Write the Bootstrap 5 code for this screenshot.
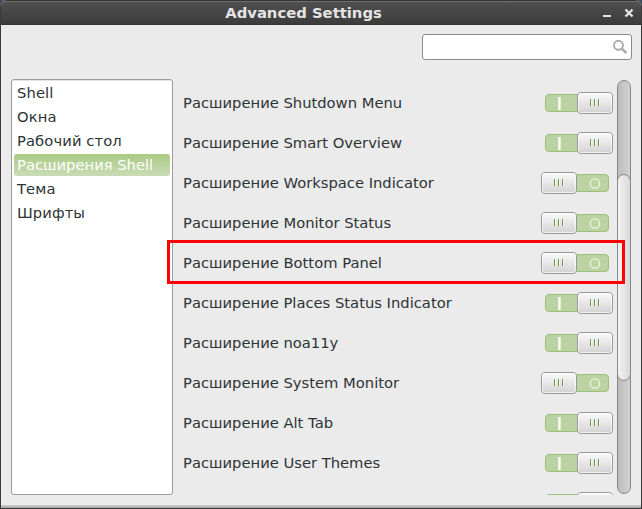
<!DOCTYPE html>
<html lang="ru">
<head>
<meta charset="utf-8">
<title>Advanced Settings</title>
<link rel="stylesheet" href="https://cdn.jsdelivr.net/npm/bootstrap@5.3.0/dist/css/bootstrap.min.css">
<style>
body{width:642px;height:509px;background:#3f5160;font-family:"DejaVu Sans",sans-serif;font-size:14.74px;color:#2d3436}
.win{width:642px;height:509px;background:#ebebeb;border:1px solid #3a3a3a;border-top:0;border-radius:6px 6px 0 0}
.titlebar{height:25px;margin:0 -1px;background:linear-gradient(#505050,#3c3c3c);border-top:1px solid #333;border-bottom:1px solid #353535;box-shadow:inset 0 1px #707070;border-radius:6px 6px 0 0;color:#e4e4e4}
.wtitle{font-weight:700;font-size:14.8px;line-height:23px;padding-right:35px}
.wbtns{right:8px;top:7px;gap:12px}
.searchrow{height:54px;padding:9px 9px 0 0}
.searchbox{width:210px;height:26px;border:1px solid #8b8b8b;border-radius:3px;background:#fff;padding-right:3px}
.side{width:162px;height:416px;border:1px solid #9c9c9c;border-radius:3px;padding:1px;box-shadow:inset 0 1px #e4e4e4}
.side .list-group-item{height:24px;line-height:22px;padding:1px 4px;background:transparent;color:#2d3436;border:0;letter-spacing:.1px}
.side .list-group-item.active{height:22px;line-height:20px;margin:1px 1px;padding:1px 3px;border-radius:3px;color:#fff;background:linear-gradient(#aacb85,#c9dbb5);letter-spacing:0}
.main{margin-left:10px}
.rows{width:440px;height:416px;padding:4px 0 0 10px;margin-right:4px}
.optrow{height:40px;flex:none}
.sw{width:72px;height:22px}
.defs{width:0;height:0}
.scroller{width:14px;height:414px;margin-top:1px;border:1px solid #888;border-radius:7px;background:linear-gradient(90deg,#bcbcbc,#d2d2d2);padding-top:93px}
.thumb{width:14px;height:207px;margin-left:-1px;border:1px solid #888;border-radius:7px;background:linear-gradient(90deg,#f3f3f3,#d8d8d8)}
.foot{height:3px;margin-top:10px;background:linear-gradient(#cfcfcf,#a3a3a3)}
.marker{left:167px;top:240px;width:458px;height:44px;border:3px solid #f00}
</style>
</head>
<body class="m-0 overflow-hidden position-relative">
<svg class="defs position-absolute">
<defs>
<linearGradient id="kg" x1="0" y1="0" x2="0" y2="1"><stop offset="0" stop-color="#fafafa"/><stop offset="1" stop-color="#d2d2d2"/></linearGradient>
</defs>
<symbol id="knob" viewBox="0 0 36 22"><rect x=".5" y=".5" width="35" height="21" rx="3.5" fill="url(#kg)" stroke="#999"/><rect x="1.5" y="1.5" width="33" height="19" rx="2.5" fill="none" stroke="#fff" stroke-opacity=".65"/><path d="M13.5 7v7M17.5 7v7M21.5 7v7" stroke="#6c9740"/><path d="M14.5 7v7M18.5 7v7M22.5 7v7" stroke="#fff" stroke-opacity=".6"/></symbol>
<symbol id="on" viewBox="0 0 72 22"><rect x="4.500" y="2.500" width="50" height="17" rx="3.500" fill="#bbd3a2" stroke="#9abf76"/><path d="M17.500 5v13" stroke="#e3efe6"/><path d="M18.500 5v13" stroke="#fff" stroke-width="1.500"/><path d="M19.500 5v13" stroke="#f7f3dc" stroke-width=".8"/><use href="#knob" x="36" y="0" width="36" height="22"/></symbol>
<symbol id="off" viewBox="0 0 72 22"><rect x="17.500" y="2.500" width="50" height="17" rx="3.500" fill="#bbd3a2" stroke="#9abf76"/><circle cx="54" cy="11.500" r="4.700" fill="none" stroke="#edf4e5" stroke-width="1.200"/><use href="#knob" x="0" y="0" width="36" height="22"/></symbol>
</svg>
<div class="win d-flex flex-column overflow-hidden">
  <header class="titlebar position-relative text-center flex-shrink-0">
    <div class="wtitle">Advanced Settings</div>
    <div class="wbtns position-absolute d-flex">
      <svg width="10" height="10"><path d="M1 8h8" stroke="#e4e4e4" stroke-width="2"/></svg>
      <svg width="10" height="10"><path d="M1.500 1.500l7 7M8.500 1.500l-7 7" stroke="#e4e4e4" stroke-width="2.400"/></svg>
    </div>
  </header>
  <div class="searchrow d-flex justify-content-end flex-shrink-0">
    <div class="searchbox d-flex align-items-center justify-content-end"><svg width="16" height="16" fill="none" stroke="#aaa"><circle cx="6.500" cy="6.300" r="4.500" stroke-width="1.900"/><path d="M9.800 9.600l4.700 4.500" stroke-width="2.500"/></svg></div>
  </div>
  <div class="main d-flex flex-shrink-0">
    <nav class="side list-group bg-white flex-shrink-0">
      <div class="list-group-item">Shell</div>
      <div class="list-group-item">Окна</div>
      <div class="list-group-item">Рабочий стол</div>
      <div class="list-group-item active">Расширения Shell</div>
      <div class="list-group-item">Тема</div>
      <div class="list-group-item">Шрифты</div>
    </nav>
    <div class="rows d-flex flex-column overflow-hidden flex-shrink-0">
      <div class="optrow d-flex align-items-center justify-content-between"><span>Расширение Shutdown Menu</span><svg class="sw"><use href="#on"/></svg></div>
      <div class="optrow d-flex align-items-center justify-content-between"><span>Расширение Smart Overview</span><svg class="sw"><use href="#on"/></svg></div>
      <div class="optrow d-flex align-items-center justify-content-between"><span>Расширение Workspace Indicator</span><svg class="sw"><use href="#off"/></svg></div>
      <div class="optrow d-flex align-items-center justify-content-between"><span>Расширение Monitor Status</span><svg class="sw"><use href="#off"/></svg></div>
      <div class="optrow d-flex align-items-center justify-content-between"><span>Расширение Bottom Panel</span><svg class="sw"><use href="#off"/></svg></div>
      <div class="optrow d-flex align-items-center justify-content-between"><span>Расширение Places Status Indicator</span><svg class="sw"><use href="#on"/></svg></div>
      <div class="optrow d-flex align-items-center justify-content-between"><span>Расширение noa11y</span><svg class="sw"><use href="#on"/></svg></div>
      <div class="optrow d-flex align-items-center justify-content-between"><span>Расширение System Monitor</span><svg class="sw"><use href="#off"/></svg></div>
      <div class="optrow d-flex align-items-center justify-content-between"><span>Расширение Alt Tab</span><svg class="sw"><use href="#on"/></svg></div>
      <div class="optrow d-flex align-items-center justify-content-between"><span>Расширение User Themes</span><svg class="sw"><use href="#on"/></svg></div>
      <div class="optrow d-flex align-items-center justify-content-end"><svg class="sw"><use href="#on"/></svg></div>
    </div>
    <div class="scroller flex-shrink-0"><div class="thumb"></div></div>
  </div>
  <div class="foot flex-shrink-0"></div>
</div>
<div class="marker position-absolute"></div>
<script src="https://cdn.jsdelivr.net/npm/bootstrap@5.3.0/dist/js/bootstrap.bundle.min.js"></script>
</body>
</html>
